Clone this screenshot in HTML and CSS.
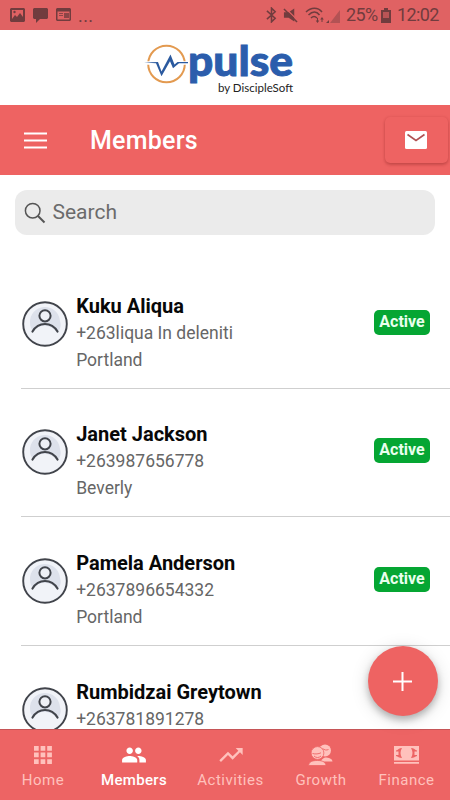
FILE: index.html
```html
<!DOCTYPE html>
<html lang="en">
<head>
<meta charset="utf-8">
<title>Members</title>
<link rel="stylesheet" href="styles.css">
</head>
<body>
<svg width="0" height="0" class="defs">
  <symbol id="avatar" viewBox="0 0 48 48">
    <circle cx="24" cy="24" r="21.800" fill="#f1f3f8" stroke="#41444b" stroke-width="1.900"/>
    <path d="M9 23a15 15 0 0 1 30-2c2 6-1 10-3 11-7-8-17-8-24-1-2-2-3-5-3-8z" fill="#dde1eb"/>
    <circle cx="24" cy="15.800" r="5.600" fill="#eef0f6" stroke="#41444b" stroke-width="2"/>
    <path d="M11.500 31.500c6-10 19-10 25 0" fill="none" stroke="#41444b" stroke-width="2.200" stroke-linecap="round"/>
  </symbol>
</svg>
<div class="app">
  <div class="status">
    <div class="notices">
      <svg width="15" height="14" viewBox="0 0 15 14"><path fill-rule="evenodd" d="M1 0h13l1 1v12l-1 1H1l-1-1V1zM2 2v9l3-4 2 2 3-4 3 4V2z"/><circle cx="4.500" cy="4" r="1.200"/></svg>
      <svg width="15" height="16" viewBox="0 0 15 16"><path d="M1 0h13l1 1v9l-1 1H7l-4 4v-4H1l-1-1V1z"/></svg>
      <svg width="15" height="13" viewBox="0 0 15 13"><path fill-rule="evenodd" d="M1 0h13l1 1v11l-1 1H1l-1-1V1zM1.500 3.500v8h12v-8z"/><path d="M3 5h4v1H3zM3 7h4v1H3zM8 5h5v5H8z" opacity=".75"/></svg>
      <span class="dots">...</span>
    </div>
    <div class="system">
      <svg class="bt" width="11" height="16" viewBox="0 0 12 17"><path d="M1 4l9 8-4 4V1l4 4-9 8" fill="none" stroke="currentColor" stroke-width="1.700"/></svg>
      <svg class="mute" width="15" height="15" viewBox="0 0 16 16"><path d="M1 4.500h5l6-4v14l-6-4H1z"/><path d="M2.500 0l14 14" stroke="#e06263" stroke-width="1.200"/><path d="M1 1l14 14" stroke="currentColor" stroke-width="1.600"/></svg>
      <svg class="wifi" width="21" height="17" viewBox="0 0 21 17"><g fill="none" stroke="currentColor" stroke-width="1.500"><path d="M1 5c5-5 12-5 16 0M3.500 8c4-4 8-4 11 0M6 11c2-2 4-2 6 0"/></g><path d="M12 11h1v2.500h1.300L12.500 16l-1.800-2.500H12zM16.500 15v-2.500h-1.300L17 10l1.800 2.500h-1.300V15z"/></svg>
      <svg class="signal" width="15" height="15" viewBox="0 0 15 15"><path d="M4 15L14 2v13z" opacity=".4"/><path d="M0 15l3-3v3z"/></svg>
      <span class="pct">25%</span>
      <svg class="battery" width="10" height="15" viewBox="0 0 10 15"><path fill-rule="evenodd" d="M3 0h4v2h3v13H0V2h3zM2 4v6h6V4z"/><path d="M2 4h6v6H2z" opacity=".35"/></svg>
      <span class="clock">12:02</span>
    </div>
  </div>
  <div class="brand">
    <svg width="160" height="68" viewBox="140 31 160 68">
      <circle cx="166.500" cy="64" r="18.300" fill="none" stroke="#e39a50" stroke-width="2"/>
      <path d="M143 63h10M180 63h8" fill="none" stroke="#fff" stroke-width="3.500"/>
      <path d="M144 62.500l14-.5 3.500 9.500 9-17 4 10 3-2.500H188v1.200h-9l-6 5-3-7-8.500 15-5.500-13z" fill="#2b5a9f"/>
      <text class="word" x="188" y="76" textLength="105" lengthAdjust="spacingAndGlyphs">pulse</text>
      <text class="byline" x="218" y="91.500" textLength="75" lengthAdjust="spacingAndGlyphs">by DiscipleSoft</text>
    </svg>
  </div>
  <header class="header">
    <svg class="menu" width="23" height="17" viewBox="0 0 23 17"><path d="M0 1.500h23M0 8.500h23M0 15.500h23" stroke="#fff" stroke-width="1.900"/></svg>
    <h1>Members</h1>
    <div class="mail"><svg width="22" height="18" viewBox="0 0 22 18"><rect width="22" height="18" rx="1.500" fill="#fff"/><path d="M2.500 3.500l8.500 6 8.500-6" fill="none" stroke="#b05152" stroke-width="1.600"/></svg></div>
  </header>
  <main class="content">
    <div class="search">
      <svg width="22" height="22" viewBox="0 0 22 22"><circle cx="8.700" cy="8.700" r="7.300" fill="none" stroke="#555" stroke-width="1.500"/><path d="M14 14l6.500 6.500" stroke="#555" stroke-width="1.900"/></svg>
      <span>Search</span>
    </div>
    <div class="list">
      <div class="row"><svg class="avatar"><use href="#avatar"/></svg><div class="info"><b>Kuku Aliqua</b><span>+263liqua In deleniti</span><span>Portland</span></div><em>Active</em></div>
      <div class="row"><svg class="avatar"><use href="#avatar"/></svg><div class="info"><b>Janet Jackson</b><span>+263987656778</span><span>Beverly</span></div><em>Active</em></div>
      <div class="row"><svg class="avatar"><use href="#avatar"/></svg><div class="info"><b>Pamela Anderson</b><span>+2637896654332</span><span>Portland</span></div><em>Active</em></div>
      <div class="row"><svg class="avatar"><use href="#avatar"/></svg><div class="info"><b>Rumbidzai Greytown</b><span>+263781891278</span></div></div>
    </div>
  </main>
  <div class="fab"><svg width="19" height="19" viewBox="0 0 19 19"><path d="M0 9.500h19M9.500 0v19" stroke="#fff" stroke-width="2"/></svg></div>
  <nav class="tabs">
    <div class="tab"><svg width="24" height="24" viewBox="0 0 24 24"><path d="M3 3h4.700v4.700H3zM9.600 3h4.700v4.700H9.600zM16.200 3h4.700v4.700h-4.700zM3 9.600h4.700v4.700H3zM9.600 9.600h4.700v4.700H9.600zM16.200 9.600h4.700v4.700h-4.700zM3 16.200h4.700v4.700H3zM9.600 16.200h4.700v4.700H9.600zM16.200 16.200h4.700v4.700h-4.700z"/></svg><span>Home</span></div>
    <div class="tab on"><svg width="26" height="26" viewBox="0 0 24 24"><path d="M16 11c1.660 0 2.990-1.340 2.990-3S17.660 5 16 5s-3 1.340-3 3 1.340 3 3 3zm-8 0c1.660 0 2.990-1.340 2.990-3S9.660 5 8 5 5 6.340 5 8s1.340 3 3 3zm0 2c-2.330 0-7 1.170-7 3.500V19h14v-2.500c0-2.330-4.670-3.500-7-3.500zm8 0c-.29 0-.62.020-.97.050 1.160.84 1.970 1.970 1.970 3.450V19h6v-2.500c0-2.330-4.670-3.500-7-3.500z"/></svg><span>Members</span></div>
    <div class="tab"><svg width="28" height="28" viewBox="0 0 24 24"><path d="M16 6l2.290 2.290-4.880 4.880-4-4L2 16.590 3.410 18l6-6 4 4 6.300-6.290L22 12V6z"/></svg><span>Activities</span></div>
    <div class="tab"><svg width="26" height="24" viewBox="0 0 26 24"><circle cx="17" cy="7.500" r="6"/><path d="M13 18.500c0-2 2-3 4-4 4 0 7 1 7.500 4z"/><g stroke="#ed6464" stroke-width=".8"><circle cx="9.500" cy="10" r="6.400"/><path d="M.5 22.500c.5-4 4-5 9-5s8 1.500 8.500 5z"/></g><path d="M4.500 10.500c3 .8 6 .5 8.500-.7M6 13c2 2 5 2 7 0M14.500 5.500c2 1.500 4 2 6 1" fill="none" stroke="#ed6464" stroke-width=".9"/></svg><span>Growth</span></div>
    <div class="tab"><svg width="25" height="20" viewBox="0 0 25 20"><path fill-rule="evenodd" d="M0 1h25v14.500H0zM8 3C5 3 4 5 2 5.500v5.500c2 .5 3 2 6 2-2-3-2-7 0-10zm9 0c3 0 4 2 6 2.500v5.500c-2 .5-3 2-6 2 2-3 2-7 0-10z"/><path d="M0 17h25v1.700H0zM2 6.500h2.500v3.500H2zM20.500 6.500H23v3.500h-2.500z"/></svg><span>Finance</span></div>
  </nav>
</div>
</body>
</html>
```
FILE: styles.css
```css
* { box-sizing: border-box; }
body { margin: 0; font-family: Roboto, sans-serif; background: #fff; }
.defs { position: absolute; }
.app { width: 450px; height: 800px; overflow: hidden; display: flex; flex-direction: column; position: relative; }
.app svg { display: block; flex-shrink: 0; }
.status { height: 30px; flex-shrink: 0; background: #e06263; color: #713c3e; display: flex; justify-content: space-between; padding: 0 11px 0 10px; }
.status svg { fill: currentColor; }
.notices { display: flex; align-items: flex-start; gap: 8px; padding-top: 8px; }
.dots { font-size: 18px; line-height: 18px; letter-spacing: .4px; margin-left: -1px; margin-top: -1px; }
.system { display: flex; align-items: center; font-size: 18px; line-height: 30px; }
.mute { margin-left: 6px; }
.wifi { margin-left: 7px; }
.signal { margin-left: 0; }
.pct { margin-left: 5px; letter-spacing: -.6px; width: 33px; white-space: nowrap; }
.battery { margin-left: 2px; }
.clock { margin-left: 6px; letter-spacing: -.6px; width: 42px; white-space: nowrap; }
.brand { height: 75px; flex-shrink: 0; padding: 1px 0 0 140px; }
.word { font: 900 42px Lato, sans-serif; fill: #2b5dac; stroke: #2b5dac; stroke-width: .9px; }
.byline { font: 400 10.500px Lato, sans-serif; fill: #222; }
.header { height: 70px; flex-shrink: 0; background: #ee6362; display: flex; align-items: center; padding: 0 2px 0 23.500px; }
.header h1 { margin: 0 0 0 43.500px; flex: 1; font-size: 25px; font-weight: 500; letter-spacing: .25px; color: #fff; line-height: 30px; padding-top: 1px; }
.mail { width: 63px; height: 46px; border-radius: 5px; display: flex; align-items: center; justify-content: center; box-shadow: 0 2px 3px rgba(110,20,20,.27), 0 0 3px rgba(110,20,20,.12); }
.mail svg { margin-left: -1px; }
.content { flex: 1; min-height: 0; overflow: hidden; }
.search { height: 45px; margin: 15px 15px 0; border-radius: 12px; background: #ebebeb; display: flex; align-items: center; gap: 6.500px; padding-left: 9px; color: #6b6b6b; font-size: 21px; line-height: 24px; }
.search span { margin-top: -1px; }
.list { padding-top: 25px; }
.row { height: 128.700px; margin-left: 21px; border-bottom: 1px solid #cfcfcf; display: flex; align-items: flex-start; padding-right: 20px; }
.avatar { width: 48px; height: 48px; margin-top: 39.500px; }
.info { flex: 1; margin: 32.500px 0 0 7.200px; display: flex; flex-direction: column; font-size: 17.500px; line-height: 27px; color: #666; }
.info b { font-size: 20px; line-height: 26px; margin-bottom: 1px; font-weight: 700; color: #080808; }
.row em { width: 56px; height: 25px; margin-top: 49.500px; border-radius: 5px; background: #05a633; color: #e9ffee; font-style: normal; font-weight: 700; font-size: 16px; line-height: 23.500px; text-align: center; }
.fab { position: absolute; left: 367.500px; top: 646px; width: 70px; height: 70px; border-radius: 50%; background: #ee6362; display: flex; align-items: center; justify-content: center; box-shadow: 0 4px 7px rgba(0,0,0,.24), 0 3px 18px rgba(0,0,0,.15); }
.tabs { height: 71.500px; flex-shrink: 0; background: #ed6464; border-top: 1px solid #c65557; display: grid; grid-template-columns: 86px 96px 97px 84px 87px; }
.tab { display: grid; grid-template-rows: 52px 20px; margin-top: -1px; justify-items: center; align-items: center; color: #ffc1bc; font-size: 15px; line-height: 20px; letter-spacing: .5px; }
.tab span { margin-top: -21px; }
.tab svg { fill: currentColor; }
.tab.on { color: #fff; font-weight: 500; letter-spacing: .35px; }
```
